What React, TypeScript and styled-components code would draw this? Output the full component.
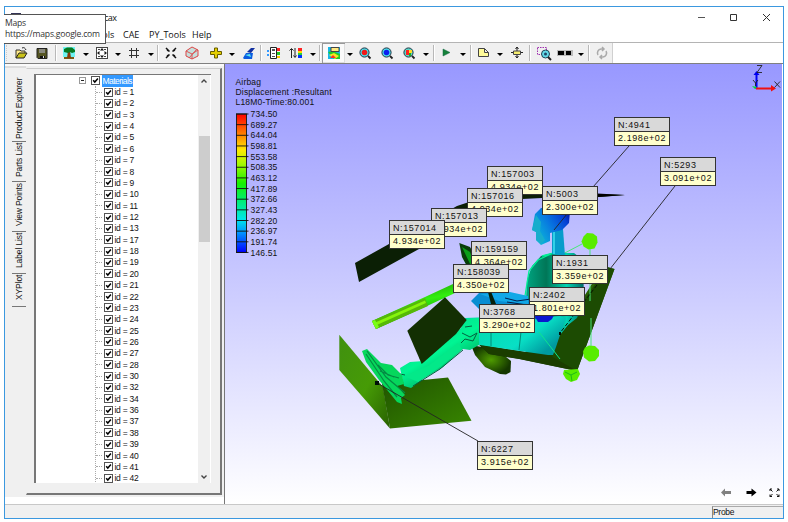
import React from "react";
import styled, { createGlobalStyle } from "styled-components";

const GlobalStyle = createGlobalStyle`
  * { box-sizing: border-box; }
  body { margin: 0; background: #fff; overflow: hidden; }
  svg { display: block; flex: none; }
`;

const Page = styled.div`
  width: 788px;
  height: 522px;
  padding: 6px 4px 3px;
  position: relative;
  font-family: "Liberation Sans", Arial, sans-serif;
  color: #111;
`;
const Window = styled.div`
  display: flex;
  flex-direction: column;
  height: 513px;
  border: 1px solid #3b98df;
`;
const TitleBar = styled.div`
  display: flex;
  align-items: center;
  height: 21px;
  flex: none;
  padding: 0 12px 0 6px;
  font: 9px "Open Sans", sans-serif;
`;
const AppIcon = styled.span`
  width: 10px;
  height: 9px;
  border: 1px solid #335;
  background: #9cc;
  margin-right: 5px;
`;
const TitleText = styled.span`
  flex: 1;
  letter-spacing: -0.6px;
  word-spacing: 1px;
  white-space: pre;
`;
const MenuBar = styled.nav`
  display: flex;
  gap: 10px;
  height: 15px;
  flex: none;
  padding-left: 87px;
  font: 9px/13px "Open Sans", sans-serif;
  border-bottom: 1px solid #b4b4b4;
`;
const MenuItem = styled.span<{ $w: number }>`
  width: ${(p) => p.$w}px;
  white-space: nowrap;
`;
const Tooltip = styled.div`
  position: absolute;
  left: 4px;
  top: 14px;
  width: 102px;
  height: 30px;
  padding: 3px 0 0 1px;
  background: #fff;
  border: 1px solid #555;
  border-left: 0;
  font: 8.6px/11.3px "Open Sans", sans-serif;
  letter-spacing: -0.22px;
  color: #333;
  white-space: nowrap;
`;
const Toolbar = styled.div`
  display: flex;
  height: 21px;
  flex: none;
  border-bottom: 1px solid #808080;
`;
const Tools = styled.div`
  display: flex;
  align-items: center;
  width: 608px;
  height: 20px;
  background: #f0f0f0;
  border-right: 1px solid #d0d0d0;
`;
const Grip = styled.span`
  width: 3px;
  height: 16px;
  margin-left: 1px;
  border-left: 1px dotted #ccc;
`;
const Separator = styled.span<{ $gap: number }>`
  width: 2px;
  height: 16px;
  margin-left: ${(p) => p.$gap}px;
  border-left: 1px solid #b8b8b8;
  background: #fff;
`;
const ToolButton = styled.span<{ $gap: number; $active?: boolean }>`
  display: flex;
  align-items: center;
  justify-content: center;
  flex: none;
  width: ${(p) => (p.$active ? 23 : 16)}px;
  height: ${(p) => (p.$active ? 20 : 16)}px;
  margin-left: ${(p) => p.$gap}px;
  background: ${(p) => (p.$active ? "#fafafa" : "none")};
  box-shadow: ${(p) => (p.$active ? "inset 1px 1px #999, inset -1px -1px #ddd" : "none")};
`;
const Caret = styled.span<{ $gap: number }>`
  display: flex;
  justify-content: center;
  width: 8px;
  margin-left: ${(p) => p.$gap}px;
  &::after {
    content: "";
    margin-top: 2px;
    border: 3px solid transparent;
    border-top-color: #000;
    border-bottom: 0;
  }
`;
const Body = styled.div`
  display: flex;
  height: 440px;
  flex: none;
`;
const Side = styled.div`
  display: flex;
  flex-direction: column;
  width: 220px;
  flex: none;
  border-right: 1px solid #777;
  background: #fff;
`;
const SideInner = styled.div`
  display: flex;
  height: 433px;
  background: #f0f0f0;
  border-top: 2px solid #fafafa;
`;
const TabStrip = styled.div`
  display: flex;
  flex-direction: column;
  width: 21px;
  padding-top: 9px;
  border-top: 2px solid #ddd;
`;
const Tab = styled.div<{ $h: number }>`
  display: flex;
  align-items: center;
  height: ${(p) => p.$h}px;
  width: 14px;
  padding-left: 0;
  margin-left: 7px;
  border-bottom: 1px solid #777;
  writing-mode: vertical-rl;
  font-size: 8.5px;
  letter-spacing: -0.12px;
  line-height: 12px;
  white-space: nowrap;
`;
const TabLabel = styled.span`
  flex: 1;
  padding-bottom: 1px;
  text-align: right;
  transform: rotate(180deg);
`;
const TabPageWrap = styled.div`
  padding-top: 2px;
`;
const TabPage = styled.div`
  width: 196px;
  height: 427px;
  padding: 5px 9px 10px 7px;
  border: 1px solid #ccc;
  border-right: 2px solid #777;
  border-bottom: 2px solid #777;
  border-left-color: #f0f0f0;
`;
const Tree = styled.div`
  display: flex;
  height: 409px;
  background: #fff;
  border-left: 2px solid #777;
  border-top: 1px solid #777;
  overflow: hidden;
`;
const TreeList = styled.div`
  flex: 1;
  font-size: 8.5px;
`;
const Branch = styled.div`
  display: flex;
  align-items: center;
  height: 11.38px;
  padding-left: 43px;
`;
const Expander = styled.span`
  display: flex;
  align-items: center;
  justify-content: center;
  width: 7px;
  height: 7px;
  border: 1px solid #999;
  margin-right: 5px;
  &::after { content: ""; width: 3px; height: 1px; background: #222; }
`;
const Selected = styled.span`
  height: 12px;
  padding: 0 1px;
  line-height: 12px;
  background: #3399ff;
  color: #fff;
  letter-spacing: -0.55px;
`;
const Leaves = styled.div`
  margin-left: 59px;
  border-left: 1px dotted #aaa;
`;
const Leaf = styled.div`
  display: flex;
  align-items: center;
  height: 11.37px;
  line-height: 10px;
  letter-spacing: -0.4px;
  word-spacing: 0.4px;
  white-space: pre;
  &::before { content: ""; width: 6px; margin-right: 2px; border-top: 1px dotted #aaa; }
`;
const Box = styled.span`
  width: 9px;
  height: 9px;
  flex: none;
  margin-right: 1.5px;
  border: 1px solid #555;
  background: #fff;
`;
const ScrollBar = styled.div`
  display: flex;
  flex-direction: column;
  align-items: center;
  justify-content: space-between;
  width: 13px;
  padding: 3px 0;
  background: #f0f0f0;
  border-right: 1px solid #fff;
`;
const Thumb = styled.div`
  width: 11px;
  height: 106px;
  margin: 0 0 180px;
  background: #cdcdcd;
`;
const View = styled.div`
  position: relative;
  width: 557px;
  height: 440px;
  background: linear-gradient(#9898ff, #c8c8ff 48%, #ffffff);
`;
const Scene = styled.svg`
  position: absolute;
  inset: 0;
`;
const Legend = styled.div`
  position: relative;
  padding: 13px 0 0 10.5px;
  font-size: 8.5px;
  line-height: 10px;
  letter-spacing: 0.18px;
`;
const Scale = styled.div`
  display: flex;
  margin-top: 2px;
  gap: 1px;
`;
const ScaleValues = styled.div`
  line-height: 10.65px;
  letter-spacing: 0.15px;
`;
const Probe = styled.div<{ $x: number; $y: number }>`
  position: absolute;
  left: ${(p) => p.$x - 225}px;
  top: ${(p) => p.$y - 64}px;
  width: 56px;
  height: 29px;
  border: 1px solid #333;
  background: #ffffcc;
  font-size: 9px;
  line-height: 13px;
  letter-spacing: 0.58px;
  white-space: nowrap;
`;
const ProbeName = styled.div`
  height: 14px;
  padding-left: 3px;
  background: #d9d9d9;
  border-bottom: 1px solid #333;
  line-height: 14px;
`;
const ProbeValue = styled.div`
  padding-left: 3px;
`;
const Status = styled.footer`
  display: flex;
  justify-content: flex-end;
  flex: 1;
  padding-top: 1px;
  background: #f0f0f0;
  border-top: 1px solid #c8c8c8;
`;
const StatusCell = styled.span`
  width: 71px;
  border-left: 1px solid #888;
  border-top: 1px solid #aaa;
  font-size: 8.5px;
  line-height: 10px;
  letter-spacing: -0.3px;
`;

const glyphs: Record<string, React.ReactNode> = {
  open: (<><path d="M3 13V5h4l1 1h4v2" fill="#ffe98a" stroke="#333" /><path d="M3 13l3-5h8l-3 5z" fill="#c9c21a" stroke="#222" /><path d="M9 3c2-1 3 0 4 2" fill="none" stroke="#222" /></>),
  save: (<><path d="M3 3.500h10v10H4l-1-1z" fill="#555522" stroke="#222" /><path d="M5 4h6v4H5z" fill="#8a8a80" /><path d="M6 11h5v2H6z" fill="#111" /><path d="M9 11h1v2H9z" fill="#ddd" /></>),
  tree: (<><path d="M2 2h12v10H2z" fill="#6ff3f3" /><path d="M3 12h10v2H3z" fill="#7a5a14" /><path d="M7 6h2l1 7H6z" fill="#8a3a08" /><path d="M3 7V4l3-1.500h5L14 5v2l-3 1-2-1-2 1z" fill="#087b22" /></>),
  fit: (<><rect x="2.500" y="2.500" width="11" height="11" fill="#fff" stroke="#444" /><path d="M8 3l2 2.500H6zM8 13l2-2.500H6zM3 8l2.500-2v4zM13 8l-2.500-2v4z" fill="#111" /><path d="M4 4h2v1H4zM10 4h2v1h-2zM4 11h2v1H4zM10 11h2v1h-2z" fill="#444" /></>),
  grid: <path d="M5.500 3v10M10.500 3v10M3 5.500h10M3 10.500h10" stroke="#333" />,
  cross: <path d="M3 3l3.500 3.500M13 3L9.500 6.500M3 13l3.500-3.500M13 13L9.500 9.500M4 5l2 1M12 5l-2 1M4 11l2-1M12 11l-2-1" stroke="#111" strokeWidth="1.500" />,
  cube: (<><path d="M2 6l6-4 6 3v6l-6 3-6-3z" fill="#c5dfdc" stroke="#d44" /><path d="M2 6l6 3 6-4M8 9v5M5 13l8-9" fill="none" stroke="#d55" /></>),
  plus: <path d="M6.500 3v3.500h-4v3h4V13h3V9.500h4v-3h-4V3z" fill="#e5cf00" stroke="#665c00" />,
  paint: (<><path d="M2 13l3-5h7l-1 6H3z" fill="#0a5ce0" /><path d="M6 7l4-4 4 0-4 5z" fill="#1230a0" /><path d="M4 10l5-1 1 3z" fill="#5be7ef" /></>),
  palette: (<><path d="M4.500 2.500h6v11h-6z" fill="#fff" stroke="#222" /><path d="M6 4h3v2H6zM6 8h3v1H6zM6 11h3v1H6z" fill="#555" /><path d="M11 3h3v3h-3z" fill="#f22" /><path d="M11 7h3v3h-3z" fill="#2c2" /><path d="M11 11h3v2h-3z" fill="#fc0" /><path d="M1 5h2v2H1zM1 9h2v2H1z" fill="#39f" /></>),
  sort: (<><path d="M3.500 13V4M1.500 5.500l2-2 2 2M7 3v9M5.500 10.500L7 12.500l1.500-2" fill="none" stroke="#222" /><path d="M10 3h4v3h-4z" fill="#f22" /><path d="M10 6h4v2h-4z" fill="#fd0" /><path d="M10 8h4v2h-4z" fill="#2c4" /><path d="M10 10h4v3h-4z" fill="#03f" /></>),
  contour: (<><path d="M2 2h12v12H2z" fill="#17b8e8" /><path d="M2 7l5-1 7 3v5H8z" fill="#20cc2a" /><path d="M3 10l5-2 5 3-4 3z" fill="#f5e720" /><path d="M4 13l3-3 3 3z" fill="#f32" /><path d="M5 2.500h8v4H5z" fill="#ffea80" stroke="#444" /></>),
  red: (<><circle cx="7.500" cy="7.500" r="4.600" fill="#48dce8" stroke="#234" /><circle cx="7.500" cy="7.500" r="2.800" fill="#f01818" /><path d="M11 11l2.500 2.500" stroke="#222" strokeWidth="1.800" /></>),
  blue: (<><circle cx="7.500" cy="7.500" r="4.600" fill="#48dce8" stroke="#234" /><circle cx="7.500" cy="7.500" r="2.800" fill="#0a1df0" /><path d="M11 11l2.500 2.500" stroke="#222" strokeWidth="1.800" /></>),
  mixed: (<><circle cx="7.500" cy="7.500" r="4.600" fill="#58d8c8" stroke="#234" /><path d="M5 5h3v5H5z" fill="#f22" /><path d="M8 5h3v3H8z" fill="#fd2" /><path d="M8 8h2v3H8z" fill="#2a2" /><path d="M11 11l2.500 2.500" stroke="#222" strokeWidth="1.800" /></>),
  play: <path d="M5 4l7 3.500L5 11z" fill="#16823a" stroke="#164" strokeWidth=".5" />,
  note: <path d="M3.500 3.500h6l4 4v4h-10z M9.500 3.500v4h4" fill="#fffb9a" stroke="#444" />,
  move: (<><path d="M8 2v11M2 7.500h12M6.500 4L8 2l1.500 2M6.500 11L8 13l1.500-2" stroke="#222" fill="none" /><path d="M4.500 6h7v3.500h-7z" fill="#f5ec70" stroke="#444" /></>),
  zoombox: (<><path d="M1.500 2.500h9v7h-9z" fill="none" stroke="#a030b0" strokeDasharray="1.500 1" /><circle cx="9.500" cy="9" r="4" fill="#62dbe8" stroke="#245" /><circle cx="9.500" cy="9" r="1.500" fill="#246" /><path d="M12 12l3 3" stroke="#222" strokeWidth="2" /></>),
  film: (<><path d="M0 5h16v6H0z" fill="#bbb" /><path d="M1 6h6v4H1zM9 6h5v4H9z" fill="#000" /></>),
  refresh: <path d="M4 10a4 4 0 0 1 3-6h3M8 2l2 2-2 2M12 6a4 4 0 0 1-3 6H6M8 14l-2-2 2-2" fill="none" stroke="#aaa" strokeWidth="1.500" />,
};

const tools: [string, number][] = [
  ["open", 4], ["save", 5], ["|", 5], ["tree", 4], ["v", 5], ["fit", 4], ["v", 4], ["grid", 4], ["v", 5], ["|", 2],
  ["cross", 4], ["cube", 5], ["plus", 8], ["v", 4], ["paint", 5], ["|", 3], ["palette", 4], ["sort", 6], ["v", 5], ["|", 2],
  ["contour", 1], ["v", 1], ["red", 3], ["blue", 6], ["mixed", 6], ["v", 5], ["|", 3], ["play", 3], ["v", 5], ["|", 3],
  ["note", 3], ["v", 5], ["move", 5], ["|", 4], ["zoombox", 5], ["film", 5], ["v", 4], ["|", 3], ["refresh", 4],
];

const ids = [1, 2, 3, 4, 5, 6, 7, 8, 9, 10, 11, 12, 13, 17, 18, 19, 20, 21, 22, 23, 24, 25, 26, 27, 28, 30, 32, 34, 36, 37, 38, 39, 40, 41, 42];
const tabs: [string, number][] = [["Product Explorer", 65], ["Parts List", 40], ["View Points", 50], ["Label List", 42], ["XYPlot", 33]];
const scale = ["734.50", "689.27", "644.04", "598.81", "553.58", "508.35", "463.12", "417.89", "372.66", "327.43", "282.20", "236.97", "191.74", "146.51"];
const probes: [string, string, number, number][] = [
  ["N:157003", "4.934e+02", 487, 166],
  ["N:157016", "4.934e+02", 467, 188],
  ["N:157013", "4.934e+02", 431, 208],
  ["N:157014", "4.934e+02", 389, 220],
  ["N:159159", "4.364e+02", 471, 241],
  ["N:158039", "4.350e+02", 453, 264],
  ["N:5003", "2.300e+02", 542, 186],
  ["N:1931", "3.359e+02", 552, 255],
  ["N:2402", "1.801e+02", 529, 287],
  ["N:3768", "3.290e+02", 479, 304],
  ["N:4941", "2.198e+02", 614, 117],
  ["N:5293", "3.091e+02", 660, 157],
  ["N:6227", "3.915e+02", 477, 441],
];

const Check = () => (
  <Box>
    <svg width="7" height="7" viewBox="0 0 7 7"><path d="M1.200 3.200l1.600 1.800L5.900 1.500" fill="none" stroke="#000" strokeWidth="1.500" /></svg>
  </Box>
);

const Chevron = ({ d }: { d: string }) => (
  <svg width="8" height="6" viewBox="0 0 8 6"><path d={d} fill="none" stroke="#444" strokeWidth="1.400" /></svg>
);

const Model = () => (
  <Scene width="557" height="440" viewBox="225 64 557 440">
    <defs>
      <linearGradient id="plate" x1="0" y1="0" x2="1" y2="1"><stop offset="0" stopColor="#409010" /><stop offset=".55" stopColor="#469b06" /><stop offset="1" stopColor="#286000" /></linearGradient>
      <linearGradient id="floor" x1="0" y1="0" x2="1" y2="1"><stop offset="0" stopColor="#205200" /><stop offset="1" stopColor="#388700" /></linearGradient>
      <linearGradient id="seat" x1="0" y1="1" x2=".7" y2="0"><stop offset="0" stopColor="#102c00" /><stop offset=".5" stopColor="#1f4d02" /><stop offset="1" stopColor="#2e6807" /></linearGradient>
      <linearGradient id="tube" x1="0" y1="0" x2=".35" y2="1"><stop offset="0" stopColor="#167700" /><stop offset=".5" stopColor="#32ef10" /><stop offset="1" stopColor="#0a7b08" /></linearGradient>
      <linearGradient id="shin" x1="0" y1="0" x2=".7" y2="1"><stop offset="0" stopColor="#05c78b" /><stop offset=".55" stopColor="#00f593" /><stop offset="1" stopColor="#00914d" /></linearGradient>
      <linearGradient id="hip" x1="0" y1="0" x2="1" y2=".5"><stop offset="0" stopColor="#00dba6" /><stop offset=".7" stopColor="#08dfc5" /><stop offset="1" stopColor="#009aa0" /></linearGradient>
      <linearGradient id="torso"><stop offset="0" stopColor="#00a581" /><stop offset=".35" stopColor="#007657" /><stop offset=".7" stopColor="#00d5b4" /><stop offset="1" stopColor="#006a67" /></linearGradient>
      <linearGradient id="head" x1="0" y1=".7" x2="1" y2=".1"><stop offset="0" stopColor="#0bbdd7" /><stop offset=".45" stopColor="#0878e0" /><stop offset=".8" stopColor="#043fd5" /><stop offset="1" stopColor="#020f93" /></linearGradient>
      <radialGradient id="leaf"><stop offset="0" stopColor="#4f9c00" /><stop offset="1" stopColor="#143700" /></radialGradient>
    </defs>
    <path d="M355 263L457 206L490 195L596 194L625 195L600 197L542 198L522 199L490 210L419 249L359 282Z" fill="#0b1f05" />
    <path d="M597 193.500L625 195L597 197Z" fill="#000" />
    <path d="M459.300 243L470 247L478 262L489 288L498 304L490 299L469 270L462 257Z" fill="#083d09" />
    <path d="M462 247L471 266L478 275L470 252Z" fill="#0aa019" />
    <path d="M488 291L505 290L499 306L492 300Z" fill="#061f0c" />
    <path d="M372 321L425 297L453 284L455 293L427 306L376 329Z" fill="url(#tube)" />
    <path d="M372 321L425 298L428 306L376 329Z" fill="#56b808" />
    <path d="M373 323.500L425 300.500L426 303L374.500 326Z" fill="#86f50c" />
    <path d="M372 321L376 329L379 327L375 320Z" fill="#78ff19" />
    <path d="M339.300 334.700L383 387L390 428.500L339.300 370Z" fill="url(#plate)" />
    <path d="M382 384L448 377.500L471.500 420.700L390 428.500Z" fill="url(#floor)" />
    <path d="M471 345L498 350L511 361L510.500 372L506 374.500L500 374L485 367L475 355Z" fill="url(#leaf)" />
    <path d="M478 344L525 352L560 335L603 266L614.500 269L577 371L520 359L489 354Z" fill="url(#seat)" />
    <path d="M559 336L607 267L614.500 269L577 371L551 361Z" fill="#1c4b02" />
    <path d="M480 345L551 356L577 371L519 359L489 354Z" fill="#1b3d00" />
    <g fill="#58ec00">
      <path d="M587 233l6 .5 4 3 .500 6-3 6-6 1-5-3-2-5 2-5z" />
      <path d="M589 345.500l6 .5 4 4v6l-4 5-6 .5-5-4-1-6 2-4z" />
      <path d="M564 370l14-1 2 5-3 6-6 2-5-3-3-5z" />
    </g>
    <path d="M565 372l6 3 6-3M571 375l1 6" stroke="#1dba19" fill="none" />
    <path d="M590 249V301M591 318V346M582 244L559 256" stroke="#48e878" fill="none" />
    <path d="M526 300L527 280L532 266L541 256L552 253L574 253L583 260L584 300L577 318L568 325L560 335L530 323Z" fill="url(#torso)" />
    <path d="M551 254L538 260L529 271L525 296M542 256L558 252" stroke="#00f096" fill="none" strokeWidth="1.300" />
    <path d="M471 301L480 292L510 294L532 300L532 318L485 315Z" fill="#088dd2" />
    <path d="M480 294L510 292L528 296L528 304L499 301Z" fill="#12a8e7" />
    <path d="M505 298l12 3 14-2M507 302l20 3" stroke="#041d4a" fill="none" />
    <path d="M487 288l3 1 6 15h-5z" fill="#06200a" />
    <path d="M534 319L552 306L553 318L549 322L540 322Z" fill="#0515bf" />
    <path d="M465 318L490 317L533 319L560 316L566 318L561 332L556 347L553 355L548 355L520 351L480 345L465 345Z" fill="url(#hip)" />
    <path d="M534 315h20l-2 4-4 3h-10z" fill="#0a18cf" />
    <path d="M491 323V346M521 332L519 350" stroke="#038a76" fill="none" />
    <path d="M539 332L560 359" stroke="#0de48f" fill="none" />
    <path d="M400 368L410 362L424 361L442 344L461 328L464 319L479 318L479 345L470 350L463 349L443 367L423 379L411 388L404 386Z" fill="url(#shin)" />
    <path d="M404 376L428 366L458 343L462 349L440 367L418 382Z" fill="#03e989" />
    <path d="M413 386L440 369L463 350M462 333l8 4 7-4-4 8-8-2-4 4M465 327l7-1M400 374l5 1" fill="none" stroke="#035f3e" />
    <path d="M362 351L367 349L381 363L392 365L402 375L404 384L397 386L405 395L401 398L402 404L397 402L379 380L366 362Z" fill="#06d75c" />
    <path d="M366 354L384 381L397 397M367 351L386 377L405 393M378 365L388 375L399 378M380 371l14 6" stroke="#048b43" fill="none" strokeWidth="1.200" />
    <path d="M445 297.300L466.700 320L456 334L421.700 364L407.300 330.700Z" fill="#132f03" />
    <path d="M552 230L563 229L565 256L552 254Z" fill="#079ccb" />
    <path d="M554 232v22" stroke="#30d1e7" strokeWidth="2" />
    <path d="M535 214L541 208L555 207L570 211L569 223L562 230L550 233L550 241L541 245L536 240L536 232L532 230Z" fill="url(#head)" />
    <path d="M536 215L541 222L540 231L545 240L541 244L536 240L536 232L532 230Z" fill="#18adcc" />
    <path d="M629 146L593 187M567 214L554 230M675 186L610 269M478 441L377 383" stroke="#222" fill="none" strokeWidth=".9" />
    <path d="M597 285L560 333" stroke="#041303" strokeDasharray="4 2" />
    <path d="M375 381h4v4h-4zM559 332h2v3h-2z" fill="#001008" />
    <path d="M756.500 89V73" stroke="#0000f0" strokeWidth="2" />
    <path d="M753.500 75l3-4 3 4z" fill="#0000f0" />
    <path d="M756 88.500h16" stroke="#f01010" strokeWidth="2" />
    <path d="M771 85l5 3.500-5 3z" fill="#f01010" />
    <path d="M752 86l5 1-2 2z" fill="#0d3" />
    <path d="M757 65.500h5l-5 7h5M774.500 81.500l5.500 6M780 81.500l-5.500 6M753 80l2.500 3 2.500-3M755.500 83v3" stroke="#222" fill="none" strokeWidth=".9" />
    <path d="M721 492.500l4-4v2.500h6v3h-6v2.500z" fill="#808080" />
    <path d="M756.500 492.500l-5-4v2.500h-5v3h5v2.500z" fill="#000" />
    <path d="M770 491v-2h2M770 489l2.500 2.500M777 489h2v2M779 489l-2.500 2.500M770 494.500v2h2M770 496.500l2.500-2.500M777 496.500h2v-2M779 496.500l-2.500-2.500" stroke="#111" fill="none" />
  </Scene>
);

const ColorBar = () => (
  <svg width="14" height="150" viewBox="0 0 14 150">
    <defs>
      <linearGradient id="bar" x1="0" y1="0" x2="0" y2="1">
        <stop offset="0" stopColor="#ff0000" /><stop offset=".15" stopColor="#ff8400" /><stop offset=".26" stopColor="#ffe900" /><stop offset=".36" stopColor="#a5f900" /><stop offset=".5" stopColor="#18f000" /><stop offset=".62" stopColor="#00ed70" /><stop offset=".76" stopColor="#00e6e9" /><stop offset=".86" stopColor="#0090ff" /><stop offset="1" stopColor="#0000ff" />
      </linearGradient>
    </defs>
    <rect x=".5" y="5" width="10" height="138.500" fill="url(#bar)" stroke="#222" />
    {scale.map((v, i) => <path key={v} d={`M0 ${5 + i * 10.65}h12.500`} stroke="#111" strokeWidth=".9" />)}
  </svg>
);

export default function App() {
  return (
    <Page>
      <GlobalStyle />
      <Window>
        <TitleBar>
          <AppIcon />
          <TitleText>VCollab Pro - [Airbag.cax</TitleText>
          <svg width="74" height="12" viewBox="0 0 74 12" fill="none" stroke="#333">
            <path d="M1 5.500h7" stroke="#555" /><path d="M33.500 2.500h6v6h-6zM66 2l7 7M73 2l-7 7" />
          </svg>
        </TitleBar>
        <MenuBar>
          <MenuItem $w={21}>Tools</MenuItem>
          <MenuItem $w={16}>CAE</MenuItem>
          <MenuItem $w={33}>PY_Tools</MenuItem>
          <MenuItem $w={20}>Help</MenuItem>
        </MenuBar>
        <Toolbar>
          <Tools>
            <Grip />
            {tools.map(([name, gap], i) =>
              name === "|" ? <Separator key={i} $gap={gap} /> :
              name === "v" ? <Caret key={i} $gap={gap} /> : (
                <ToolButton key={i} $gap={gap} $active={name === "contour"}>
                  <svg width="16" height="16" viewBox="0 0 16 16">{glyphs[name]}</svg>
                </ToolButton>
              ))}
          </Tools>
        </Toolbar>
        <Body>
          <Side>
            <SideInner>
              <TabStrip>
                {tabs.map(([name, h]) => <Tab key={name} $h={h}><TabLabel>{name}</TabLabel></Tab>)}
              </TabStrip>
              <TabPageWrap>
                <TabPage>
                  <Tree>
                    <TreeList>
                      <Branch><Expander /><Check /><Selected>Materials</Selected></Branch>
                      <Leaves>{ids.map((id) => <Leaf key={id}><Check />{`id = ${id}`}</Leaf>)}</Leaves>
                    </TreeList>
                    <ScrollBar>
                      <Chevron d="M1.500 4.500L4 2l2.500 2.500" />
                      <Thumb />
                      <Chevron d="M1.500 1.500L4 4l2.500-2.500" />
                    </ScrollBar>
                  </Tree>
                </TabPage>
              </TabPageWrap>
            </SideInner>
          </Side>
          <View>
            <Model />
            <Legend>
              <div>Airbag</div>
              <div>Displacement :Resultant</div>
              <div>L18M0-Time:80.001</div>
              <Scale>
                <ColorBar />
                <ScaleValues>{scale.map((v) => <div key={v}>{v}</div>)}</ScaleValues>
              </Scale>
            </Legend>
            {probes.map(([name, value, x, y]) => (
              <Probe key={name} $x={x} $y={y}>
                <ProbeName>{name}</ProbeName>
                <ProbeValue>{value}</ProbeValue>
              </Probe>
            ))}
          </View>
        </Body>
        <Status><StatusCell>Probe</StatusCell></Status>
      </Window>
      <Tooltip>
        <div>Maps</div>
        <div>https://maps.google.com</div>
      </Tooltip>
    </Page>
  );
}
